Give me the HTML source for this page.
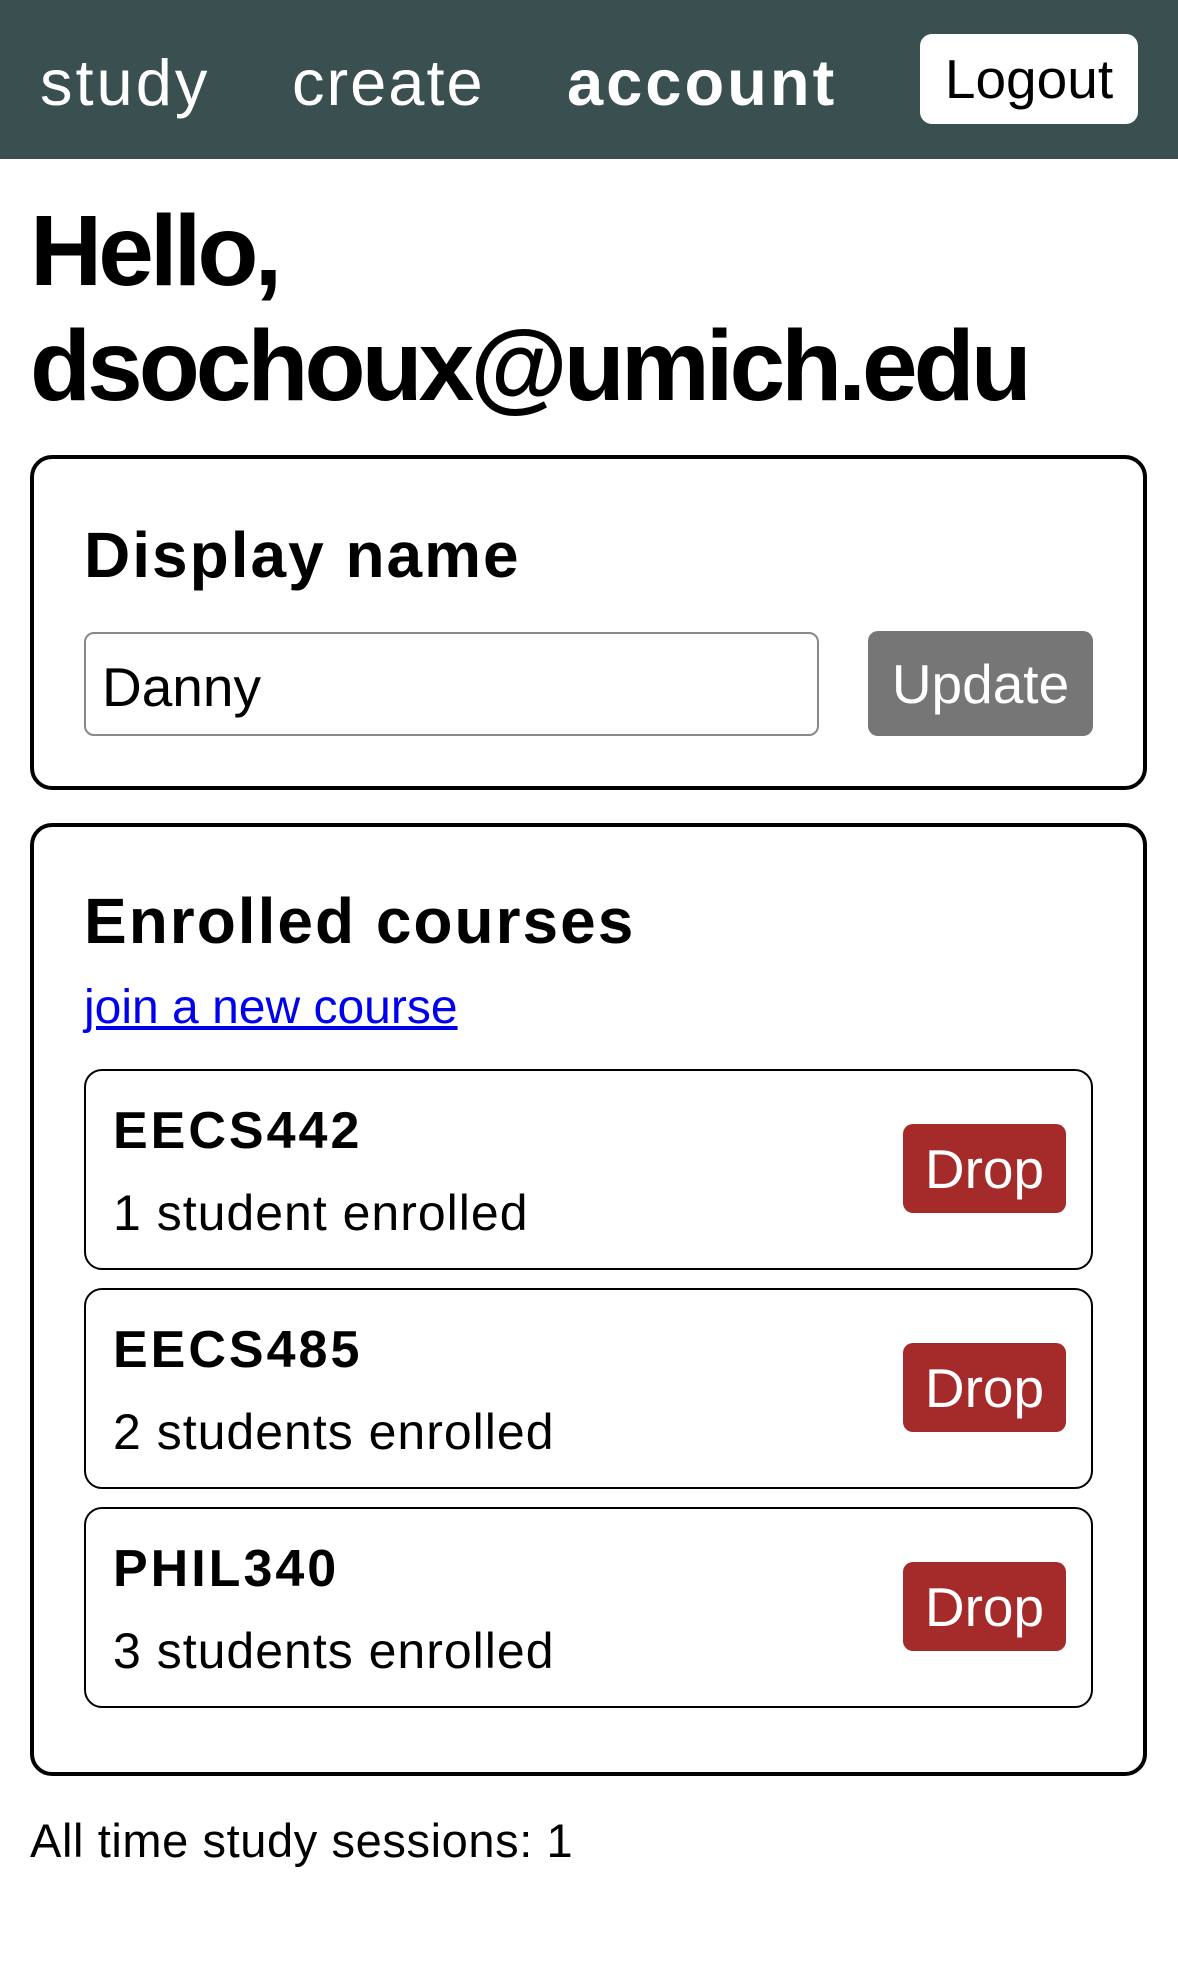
<!DOCTYPE html>
<html><head><meta charset="utf-8"><style>
*{margin:0;padding:0;box-sizing:border-box}
body{width:1178px;height:1968px;background:#fff;font-family:"Liberation Sans",Arial,sans-serif;position:relative;overflow:hidden;color:#000}
.a{position:absolute;line-height:1;white-space:nowrap}
nav{position:absolute;left:0;top:0;width:1178px;height:159px;background:#3a5050}
.n{color:#fff;font-size:65px;top:50px}
.logout{position:absolute;left:920px;top:34px;width:218px;height:90px;background:#fff;border-radius:12px;font-size:55px;display:flex;align-items:center;justify-content:center}
.card{position:absolute;left:30px;width:1117px;border:4px solid #000;border-radius:22px}
.h2{font-size:64px;font-weight:bold;letter-spacing:2px}
.course{position:absolute;left:84px;width:1009px;height:201px;border:2px solid #000;border-radius:18px}
.course .t{position:absolute;left:27px;top:34px;font-size:52px;font-weight:bold;line-height:1;letter-spacing:3px}
.course .s{position:absolute;left:27px;top:117px;font-size:50px;line-height:1;letter-spacing:1px}
.drop{position:absolute;left:817px;top:53px;width:163px;height:89px;background:#a52a2a;color:#fff;border-radius:10px;font-size:55px;display:flex;align-items:center;justify-content:center}
</style></head><body>
<nav></nav>
<div class="a n" style="left:40px;letter-spacing:3px">study</div>
<div class="a n" style="left:292px;letter-spacing:2px">create</div>
<div class="a n" style="left:567px;font-weight:bold;letter-spacing:3px">account</div>
<div class="logout">Logout</div>
<div class="a" style="left:30px;top:201px;font-size:100px;font-weight:bold;letter-spacing:-4px">Hello,</div>
<div class="a" style="left:30px;top:316px;font-size:100px;font-weight:bold;letter-spacing:-4px">dsochoux@umich.edu</div>
<div class="card" style="top:455px;height:335px"></div>
<div class="a h2" style="left:84px;top:523px">Display name</div>
<div style="position:absolute;left:84px;top:632px;width:735px;height:104px;border:2px solid #888;border-radius:10px"></div>
<div class="a" style="left:102px;top:660px;font-size:55px">Danny</div>
<div style="position:absolute;left:868px;top:631px;width:225px;height:105px;background:#767676;border-radius:10px;color:#fff;font-size:55px;display:flex;align-items:center;justify-content:center">Update</div>
<div class="card" style="top:823px;height:953px"></div>
<div class="a h2" style="left:84px;top:889px">Enrolled courses</div>
<div class="a" style="left:84px;top:984px;font-size:48px;color:#0000ee;text-decoration:underline">join a new course</div>
<div class="course" style="top:1069px"><div class="t">EECS442</div><div class="s">1 student enrolled</div><div class="drop">Drop</div></div>
<div class="course" style="top:1288px"><div class="t">EECS485</div><div class="s">2 students enrolled</div><div class="drop">Drop</div></div>
<div class="course" style="top:1507px"><div class="t">PHIL340</div><div class="s">3 students enrolled</div><div class="drop">Drop</div></div>
<div class="a" style="left:30px;top:1817px;font-size:47px;letter-spacing:0.6px">All time study sessions: 1</div>
</body></html>
